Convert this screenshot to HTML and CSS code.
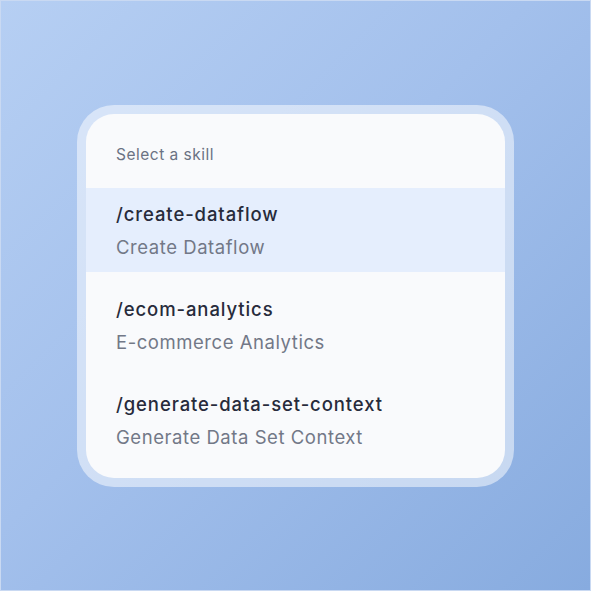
FILE: index.html
```html
<!DOCTYPE html>
<html>
<head>
<meta charset="utf-8">
<link rel="stylesheet" href="styles.css">
</head>
<body>
<div class="stage">
  <div class="frame">
    <div class="card">
      <div class="header">Select a skill</div>
      <div class="list">
        <div class="item selected">
          <div class="cmd">/create-dataflow</div>
          <div class="desc">Create Dataflow</div>
        </div>
        <div class="item">
          <div class="cmd">/ecom-analytics</div>
          <div class="desc">E-commerce Analytics</div>
        </div>
        <div class="item">
          <div class="cmd">/generate-data-set-context</div>
          <div class="desc">Generate Data Set Context</div>
        </div>
      </div>
    </div>
  </div>
</div>
</body>
</html>
```
FILE: styles.css
```css
* { box-sizing: border-box; }
html, body { margin: 0; padding: 0; }
body { width: 591px; height: 591px; font-family: Inter, "Noto Sans", sans-serif; }
.stage {
  width: 591px; height: 591px;
  border: 1px solid #c9d9f2;
  background: linear-gradient(135deg, #b6cff3 0%, #a3c0ec 45%, #87abdf 100%);
  display: flex; align-items: center; justify-content: center;
}
.frame {
  width: 437px;
  padding: 9px;
  border-radius: 37px;
  background: rgba(255,255,255,0.5);
}
.card {
  background: #f9fafc;
  border-radius: 28px;
  padding-bottom: 16px;
  overflow: hidden;
}
.header {
  height: 74px;
  padding: 30px 30px 0;
  font-size: 15.5px;
  color: #6b7283;
  line-height: 22px;
  letter-spacing: 0.5px;
}
.list { display: flex; flex-direction: column; gap: 11px; }
.item {
  height: 84px;
  padding: 14px 30px 0;
}
.item.selected { background: #e5eefd; }
.cmd { font-size: 18.5px; line-height: 24px; color: #272b3b; font-weight: 450; letter-spacing: 0.9px; }
.desc { font-size: 18.5px; line-height: 24px; margin-top: 9px; color: #727887; letter-spacing: 0.55px; }
```
